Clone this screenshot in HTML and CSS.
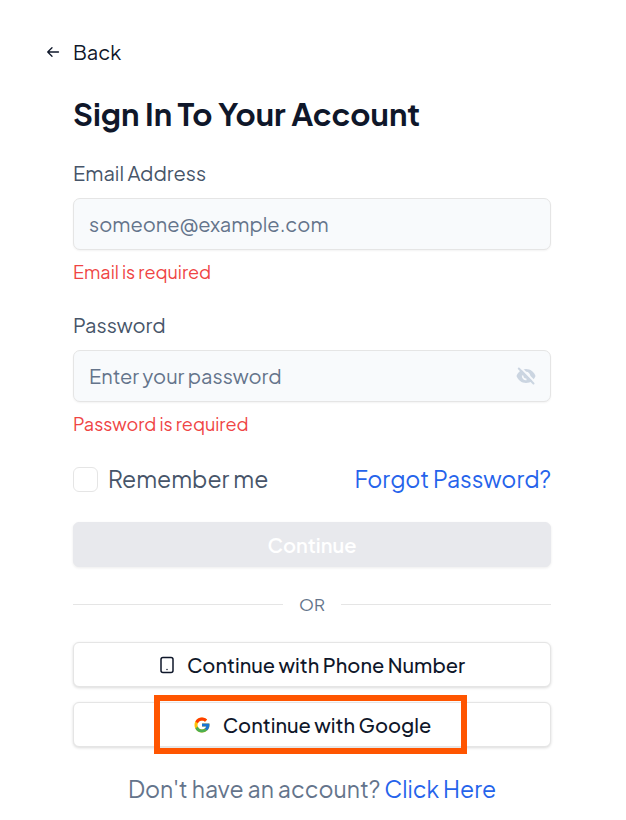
FILE: index.html
```html
<!DOCTYPE html>
<html lang="en">
<head>
    <meta charset="UTF-8">
    <meta name="viewport" content="width=device-width, initial-scale=1">
    <title>Sign In</title>
    <link rel="stylesheet" href="styles.css">
</head>
<body>
    <main class="container">
        <a class="back" href="/">
            <svg width="14" height="14" viewBox="0 0 14 14" fill="none" stroke="currentColor" stroke-width="1.3" stroke-linecap="round" stroke-linejoin="round" aria-hidden="true">
                <path d="M12.5 7H1.7M6 2.7L1.7 7L6 11.3"/>
            </svg>
            Back
        </a>
        <h1>Sign In To Your Account</h1>
        <form method="post" action="/login" novalidate>
            <div class="field">
                <label for="email">Email Address</label>
                <input type="email" id="email" name="email" placeholder="someone@example.com">
                <p class="error">Email is required</p>
            </div>
            <div class="field">
                <label for="password">Password</label>
                <div class="password">
                    <input type="password" id="password" name="password" placeholder="Enter your password">
                    <button type="button" class="toggle" aria-label="Show password">
                        <svg width="20" height="20" viewBox="0 0 20 20" aria-hidden="true">
                            <path fill="currentColor" d="M.5 10C2 5.800 5.600 3 10 3s8 2.800 9.500 7c-1.500 4.200-5.100 7-9.500 7S2 14.200.5 10z"/>
                            <path fill="none" stroke="#f8fafc" stroke-width="1.700" d="M9.500 6.800a3.300 3.300 0 0 1 3.800 4.200M6.700 9.500a3.300 3.300 0 0 0 3.800 3.800"/>
                            <path stroke="#f8fafc" stroke-width="2" d="M4.500 1.500L19.500 16.500"/>
                            <path stroke="currentColor" stroke-width="2" stroke-linecap="round" d="M2.800 2.500L17.500 17.500"/>
                        </svg>
                    </button>
                </div>
                <p class="error">Password is required</p>
            </div>
            <div class="options">
                <label class="remember" for="remember">
                    <input type="checkbox" id="remember" name="remember">
                    Remember me
                </label>
                <a href="/forgot-password">Forgot Password?</a>
            </div>
            <button type="submit" class="btn submit" disabled>Continue</button>
        </form>
        <div class="divider">OR</div>
        <div class="providers">
            <button type="button" class="btn">
                <svg width="16" height="18" viewBox="0 0 16 18" fill="none" stroke="currentColor" stroke-width="1.5" stroke-linecap="round" aria-hidden="true">
                    <rect x="2" y="1.5" width="12" height="15" rx="2"/>
                    <path d="M8 13.5h.01"/>
                </svg>
                Continue with Phone Number
            </button>
            <button type="button" class="btn google">
                <svg width="18" height="18" viewBox="0 0 48 48" aria-hidden="true">
                    <path fill="#FFC107" d="M43.6 20.1H42V20H24v8h11.3C33.7 32.7 29.2 36 24 36c-6.600 0-12-5.400-12-12s5.400-12 12-12c3.100 0 5.800 1.200 8 3l5.700-5.600C34 6.100 29.300 4 24 4 13 4 4 13 4 24s9 20 20 20 20-9 20-20c0-1.300-.1-2.700-.4-3.900z"/>
                    <path fill="#FF3D00" d="M6.300 14.700l6.600 4.800C14.700 15.100 19 12 24 12c3.100 0 5.800 1.200 8 3l5.700-5.600C34 6.100 29.300 4 24 4 16.300 4 9.700 8.300 6.300 14.700z"/>
                    <path fill="#4CAF50" d="M24 44c5.200 0 9.900-2 13.400-5.200l-6.200-5.200C29.200 35.100 26.700 36 24 36c-5.200 0-9.600-3.300-11.300-7.900l-6.500 5C9.500 39.600 16.200 44 24 44z"/>
                    <path fill="#1976D2" d="M43.600 20.100H42V20H24v8h11.300c-.8 2.200-2.200 4.200-4.100 5.600l6.200 5.200C37 39.200 44 34 44 24c0-1.300-.1-2.700-.4-3.900z"/>
                </svg>
                Continue with Google
                <span class="highlight"></span>
            </button>
        </div>
        <p class="signup">Don't have an account? <a href="/signup">Click Here</a></p>
    </main>
</body>
</html>
```

FILE: styles.css
```css
* {
    box-sizing: border-box;
}
body {
    margin: 0;
    background: #fff;
    color: #0f172a;
    font-family: "Plus Jakarta Sans", "Inter", sans-serif;
}
h1, p {
    margin: 0;
}
input, button {
    font-family: inherit;
}
a {
    color: #2563eb;
    text-decoration: none;
}
.container {
    padding: 38px 75px 14px 73px;
}
.back {
    display: flex;
    align-items: center;
    gap: 13px;
    margin-left: -27px;
    color: #0f172a;
    font-size: 20px;
    line-height: 28px;
}
h1 {
    margin: 28px 0 27px;
    font-size: 31px;
    font-weight: 700;
    line-height: 40px;
}
.field {
    margin-bottom: 29px;
}
.field label {
    display: block;
    margin-bottom: 13px;
    color: #475569;
    font-size: 20px;
    line-height: 24px;
}
.field input {
    display: block;
    width: 100%;
    height: 52px;
    padding: 0 15px 2px;
    border: 1px solid #e5e5e5;
    border-radius: 7px;
    background: #f8fafc;
    box-shadow: 0 1px 2px rgba(0, 0, 0, 0.05);
    color: #0f172a;
    font-size: 20px;
}
.field input::placeholder {
    color: #64748b;
    opacity: 1;
}
.error {
    margin-top: 10px;
    color: #ef4444;
    font-size: 18px;
    line-height: 24px;
}
.password {
    position: relative;
}
.toggle {
    position: absolute; /* sits over the right end of the input */
    top: 0;
    right: 15px;
    display: flex;
    align-items: center;
    height: 100%;
    padding: 0;
    border: none;
    background: none;
    color: #cbd5e1;
    cursor: pointer;
}
.options {
    display: flex;
    align-items: center;
    justify-content: space-between;
    margin-bottom: 29px;
    font-size: 23px;
    line-height: 28px;
}
.remember {
    display: flex;
    align-items: center;
    gap: 10px;
    color: #475569;
}
.remember input {
    appearance: none;
    width: 25px;
    height: 25px;
    margin: 0;
    border: 1px solid #e5e5e5;
    border-radius: 6px;
    background: #fff;
}
.remember input:checked {
    background: #2563eb;
}
.btn {
    position: relative;
    display: flex;
    align-items: center;
    justify-content: center;
    gap: 12px;
    width: 100%;
    height: 45px;
    padding: 0;
    border: 1px solid #e5e5e5;
    border-radius: 6px;
    background: #fff;
    box-shadow: 0 1px 3px rgba(0, 0, 0, 0.15);
    color: #0f172a;
    font-size: 20px;
    font-weight: 500;
    cursor: pointer;
}
.submit {
    border-color: #e8e9ed;
    background: #e8e9ed;
    box-shadow: 0 1px 3px rgba(0, 0, 0, 0.08);
    color: #fff;
    font-weight: 600;
}
.divider {
    display: flex;
    align-items: center;
    gap: 16px;
    margin: 25px 0 26px;
    color: #64748b;
    font-size: 17px;
    line-height: 24px;
}
.divider::before,
.divider::after {
    content: "";
    flex: 1;
    height: 1px;
    background: #e5e5e5;
}
.providers {
    display: flex;
    flex-direction: column;
    gap: 15px;
}
.highlight {
    position: absolute;
    top: -8px;
    bottom: -8px;
    left: calc(50% - 158px);
    width: 313px;
    border: 6px solid #ff5500;
}
.signup {
    margin-top: 26px;
    color: #64748b;
    font-size: 23px;
    line-height: 32px;
    text-align: center;
}
```
